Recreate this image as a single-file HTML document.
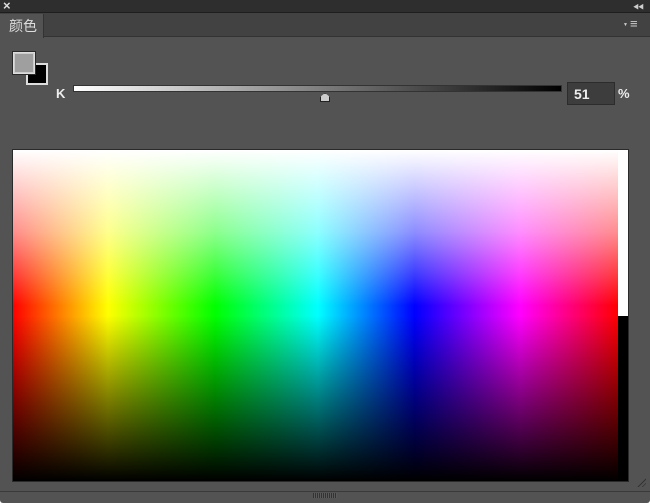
<!DOCTYPE html>
<html><head><meta charset="utf-8"><style>
*{margin:0;padding:0;box-sizing:border-box}
body{width:650px;height:503px;background:#fff;font-family:"Liberation Sans","Noto Sans CJK SC",sans-serif;position:relative;overflow:hidden}
.abs{position:absolute}
</style></head><body>
<div class="abs" style="left:0;top:0;width:650px;height:503px;background:#535353;border-radius:3px"></div>
<div class="abs" style="left:0;top:0;width:650px;height:13px;background:#2e2e2e;border-bottom:1px solid #1e1e1e"></div>
<div class="abs" style="left:3px;top:-2px;color:#ddd;font-size:13px;font-weight:bold">×</div>
<div class="abs" style="left:633px;top:2px;color:#ccc;font-size:6px;letter-spacing:-1px">◀◀</div>
<div class="abs" style="left:0;top:13px;width:650px;height:24px;background:#424242;border-bottom:1px solid #333"></div>
<div class="abs" style="left:0;top:14px;width:44px;height:24px;background:#535353;border-right:1px solid #333"></div>
<div class="abs" style="left:9px;top:16px;color:#ddd;font-size:14px">颜色</div>
<div class="abs" style="left:630px;top:18px;color:#ccc;font-size:13px;line-height:12px">≡</div>
<div class="abs" style="left:623px;top:22px;color:#ccc;font-size:5px">▼</div>
<div class="abs" style="left:26px;top:63px;width:22px;height:22px;background:#000;border:2px solid #ddd"></div>
<div class="abs" style="left:12px;top:51px;width:24px;height:24px;border:1px solid #2a2a2a;background:#ddd;padding:1px"><div style="width:100%;height:100%;background:#9f9f9f;border:1px solid #ccc"></div></div>
<div class="abs" style="left:56px;top:86px;color:#eee;font-size:13px;font-weight:bold">K</div>
<div class="abs" style="left:73px;top:85px;width:489px;height:7px;border:1px solid #333;background:linear-gradient(to right,#fff,#000)"></div>
<div class="abs" style="left:320px;top:93px;width:10px;height:9px;background:#ccc;border:1px solid #222;clip-path:polygon(50% 0,100% 45%,100% 100%,0 100%,0 45%)"></div>
<div class="abs" style="left:567px;top:82px;width:48px;height:23px;background:#3d3d3d;border:1px solid #2c2c2c;color:#eee;font-size:14px;font-weight:bold;padding:3px 0 0 6px">51</div>
<div class="abs" style="left:618px;top:86px;color:#eee;font-size:13px;font-weight:bold">%</div>
<div class="abs" style="left:12px;top:149px;width:617px;height:333px;border:1px solid #2a2a2a"></div>
<div class="abs" style="left:13px;top:150px;width:605px;height:331px;background:linear-gradient(to right,#f00 0%,#ff0 15.7%,#0f0 33.4%,#0ff 50.4%,#00f 66.4%,#f0f 83.8%,#f00 100%)"></div>
<div class="abs" style="left:13px;top:150px;width:605px;height:331px;background:linear-gradient(to bottom,#fff 0%,rgba(255,255,255,.55) 25%,rgba(255,255,255,0) 47%,rgba(0,0,0,0) 50%,rgba(0,0,0,.5) 75%,#000 100%)"></div>
<div class="abs" style="left:618px;top:150px;width:10px;height:166px;background:#fff"></div>
<div class="abs" style="left:618px;top:316px;width:10px;height:165px;background:#000"></div>
<div class="abs" style="left:0;top:491px;width:650px;height:1px;background:#3a3a3a"></div>
<div class="abs" style="left:313px;top:493px;width:24px;height:5px;background:repeating-linear-gradient(to right,#333 0 1px,#5a5a5a 1px 2px)"></div>
<div class="abs" style="left:636px;top:477px;width:10px;height:10px;background:repeating-linear-gradient(135deg,transparent 0 2px,#333 2px 3px);clip-path:polygon(100% 0,100% 100%,0 100%)"></div>
</body></html>
